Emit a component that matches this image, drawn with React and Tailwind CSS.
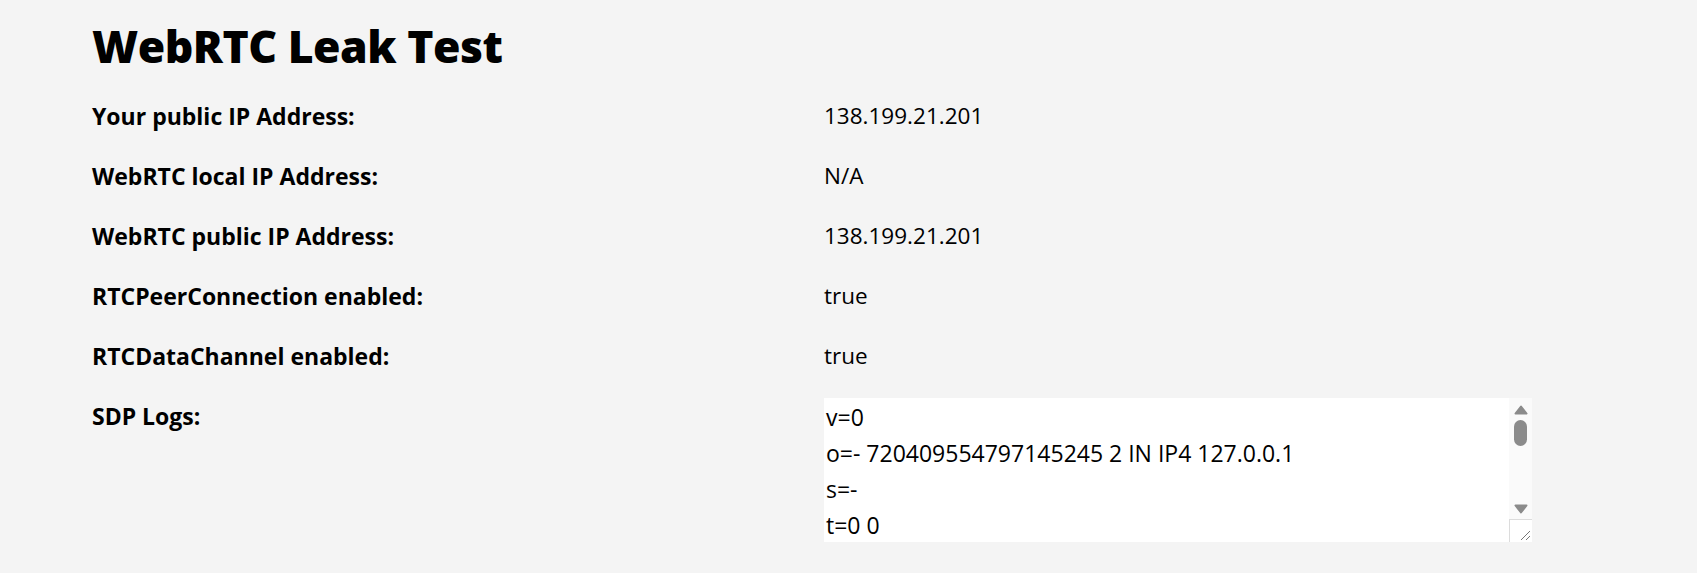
import React from "react";

const rows = [
  ["Your public IP Address:", "138.199.21.201"],
  ["WebRTC local IP Address:", "N/A"],
  ["WebRTC public IP Address:", "138.199.21.201"],
  ["RTCPeerConnection enabled:", "true"],
  ["RTCDataChannel enabled:", "true"],
];

const sdp = `v=0
o=- 720409554797145245 2 IN IP4 127.0.0.1
s=-
t=0 0
a=group:BUNDLE 0
a=extmap-allow-mixed
a=msid-semantic: WMS
m=application 9 UDP/DTLS/SCTP webrtc-datachannel
c=IN IP4 0.0.0.0`;

const Scrollbar = () => (
  <div className="absolute right-0 top-0 bottom-0 w-[23px] flex flex-col">
    <div className="flex-1 bg-[#fafafa] flex flex-col items-center">
      <svg width="14" height="10" viewBox="0 0 14 10" className="mt-[7px]">
        <path d="M7 1.5 L12.5 8.5 L1.5 8.5 Z" fill="#8b8b8b" stroke="#8b8b8b" strokeLinejoin="round" strokeWidth="2" />
      </svg>
      <div className="mt-[5px] w-[13px] h-[26px] rounded-full bg-[#8b8b8b]" />
      <div className="flex-1" />
      <svg width="14" height="10" viewBox="0 0 14 10" className="mb-[5px]">
        <path d="M1.5 1.5 L12.5 1.5 L7 8.5 Z" fill="#8b8b8b" stroke="#8b8b8b" strokeLinejoin="round" strokeWidth="2" />
      </svg>
    </div>
    <div className="h-[23px] bg-white border-l border-t border-[#dcdcdc] relative">
      <svg width="12" height="12" viewBox="0 0 12 12" className="absolute right-[1px] bottom-[1px]">
        <path d="M11 2 L2 11 M11 7 L7 11" stroke="#777" strokeWidth="1" />
      </svg>
    </div>
  </div>
);

export default function App() {
  return (
    <div
      className="min-h-screen bg-[#f4f4f4] text-black pl-[92px] pt-[18px]"
      style={{ fontFamily: '"Open Sans", "Noto Sans", sans-serif' }}
    >
      <h1 className="text-[44.5px] leading-[56px] font-extrabold tracking-[-0.5px]">WebRTC Leak Test</h1>
      <div className="mt-[24px] grid grid-cols-[732px_708px] gap-y-[24px] leading-[36px]">
        {rows.map(([label, value]) => (
          <React.Fragment key={label}>
            <div className="font-bold text-[23px]">{label}</div>
            <div className="text-[22.5px]">{value}</div>
          </React.Fragment>
        ))}
        <div className="font-bold text-[23px]">SDP Logs:</div>
        <div className="relative h-[144px] bg-white">
          <textarea
            readOnly
            value={sdp}
            className="block w-full h-full resize-none bg-white pl-[2px] pt-[1px] pr-[26px] text-[23px] leading-[36px] outline-none overflow-hidden whitespace-pre"
          />
          <Scrollbar />
        </div>
      </div>
    </div>
  );
}
